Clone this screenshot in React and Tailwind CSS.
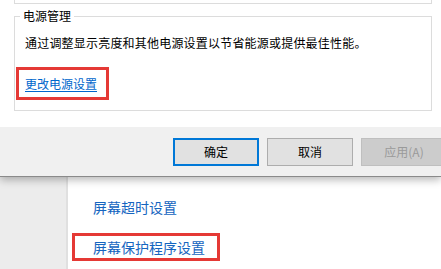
export default function App() {
  return (
    <div
      className="w-[441px] h-[269px] overflow-hidden bg-white flex flex-col"
      style={{ fontFamily: '"Noto Sans CJK SC", "Microsoft YaHei", sans-serif' }}
    >
      {/* dialog */}
      <div className="relative z-10 flex flex-col h-[177px] border-b border-[#8a8a8a] shadow-[0_3px_8px_rgba(0,0,0,0.28)] bg-white shrink-0">
        <div className="h-[127px] bg-white pl-[14px] pr-[9px]">
          <div className="h-[4px] border-x border-b border-[#dcdcdc]" />
          <fieldset className="mt-[4px] border border-[#dcdcdc] p-0 pb-[10px] m-0">
            <legend className="ml-[5px] px-[3px] text-[12px] leading-[16px] text-black">电源管理</legend>
            <div className="mt-[11px] pl-[10px] text-[12px] leading-[16px] tracking-[0.2px] text-black">
              通过调整显示亮度和其他电源设置以节省能源或提供最佳性能。
            </div>
            <div className="mt-[16px] ml-[1px] w-[93px] h-[33px] border-[3px] border-[#e53935] pl-[6px] flex items-center">
              <span className="text-[12px] leading-[16px] text-[#0066cc] underline underline-offset-2">更改电源设置</span>
            </div>
          </fieldset>
        </div>
        <div className="flex-1 bg-[#f0f0f0] flex gap-[8px] pl-[173px] pt-[11px]">
          <div className="w-[86px] h-[28px] shrink-0 bg-[#e1e1e1] border-2 border-[#0078d7] flex items-center justify-center text-[12px] text-black">
            确定
          </div>
          <div className="w-[86px] h-[28px] shrink-0 bg-[#e1e1e1] border border-[#adadad] flex items-center justify-center text-[12px] text-black">
            取消
          </div>
          <div className="w-[86px] h-[28px] shrink-0 bg-[#cccccc] border border-[#bfbfbf] flex items-center justify-center text-[12px] text-[#9a9a9a]">
            应用(A)
          </div>
        </div>
      </div>
      {/* lower window */}
      <div className="flex flex-1">
        <div className="w-[68px] bg-[#ececec] border-r-2 border-[#e0e0e0] shrink-0" />
        <div className="flex-1 bg-white pt-[20px] pl-[4px]">
          <div className="pl-[21px] text-[14px] leading-[20px] text-[#1565c0]">屏幕超时设置</div>
          <div className="mt-[16px] w-[148px] h-[28px] border-[3px] border-[#e53935] pl-[18px] flex items-center">
            <span className="text-[14px] leading-[20px] text-[#1565c0]">屏幕保护程序设置</span>
          </div>
        </div>
      </div>
    </div>
  );
}
